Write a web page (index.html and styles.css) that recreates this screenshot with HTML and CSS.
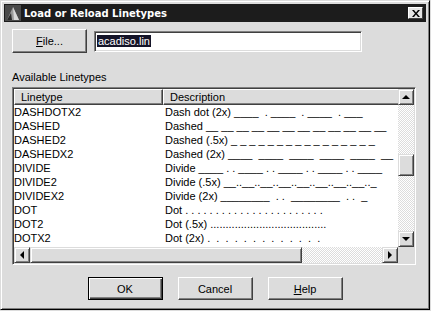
FILE: index.html
```html
<!DOCTYPE html>
<html>
	<head>
		<meta charset="UTF-8">
		<title>Load or Reload Linetypes</title>
		<link rel="stylesheet" href="styles.css">
	</head>
	<body>
		<div class="dialog">
			<div class="titlebar">
				<svg class="app-icon" width="16" height="16" viewBox="0 0 16 16">
					<rect x="0" y="0" width="16" height="16" fill="#4a4a4a"/>
					<polygon points="2,15 8,2 14,15" fill="#9a9a9a"/>
					<polygon points="8,2 14,15 9,15" fill="#d8d8d8"/>
					<polygon points="2,15 6,8 7,15" fill="#2a2a2a"/>
				</svg>
				<span class="title">Load or Reload Linetypes</span>
				<span class="close">
					<svg width="8" height="7" viewBox="0 0 8 7">
						<path d="M0 0h2l2 2.5L6 0h2L5 3.5 8 7H6L4 4.5 2 7H0l3-3.5z" fill="#000"/>
					</svg>
				</span>
			</div>
			<div class="content">
				<div class="file-row">
					<button class="btn file-btn"><u>F</u>ile...</button>
					<div class="field"><span class="sel">acadiso.lin</span></div>
				</div>
				<div class="group-label">Available Linetypes</div>
				<div class="listview">
					<div class="list-main">
						<div class="list-head">
							<div class="col-h c1">Linetype</div>
							<div class="col-h c2">Description</div>
						</div>
						<div class="rows">
							<div class="row"><span class="c1">DASHDOTX2</span><span class="c2">Dash dot (2x) ____  . ____  . ____  . ___</span></div>
							<div class="row"><span class="c1">DASHED</span><span class="c2">Dashed __ __ __ __ __ __ __ __ __ __ __ __</span></div>
							<div class="row"><span class="c1">DASHED2</span><span class="c2">Dashed (.5x) _ _ _ _ _ _ _ _ _ _ _ _ _ _ _ _</span></div>
							<div class="row"><span class="c1">DASHEDX2</span><span class="c2">Dashed (2x) ____  ____  ____  ____  ____  __</span></div>
							<div class="row"><span class="c1">DIVIDE</span><span class="c2">Divide ____ . . ____ . . ____ . . ____ . . ____</span></div>
							<div class="row"><span class="c1">DIVIDE2</span><span class="c2">Divide (.5x) __..__..__..__..__..__..__..__.._</span></div>
							<div class="row"><span class="c1">DIVIDEX2</span><span class="c2">Divide (2x) ________  . .  ________  . .  _</span></div>
							<div class="row"><span class="c1">DOT</span><span class="c2">Dot . . . . . . . . . . . . . . . . . . . . . . .</span></div>
							<div class="row"><span class="c1">DOT2</span><span class="c2">Dot (.5x) ......................................</span></div>
							<div class="row"><span class="c1">DOTX2</span><span class="c2">Dot (2x) .  .  .  .  .  .  .  .  .  .  .  .  .</span></div>
						</div>
					</div>
					<div class="vscroll">
						<div class="sb-btn"><span class="arrow up"></span></div>
						<div class="track t-top"></div>
						<div class="thumb"></div>
						<div class="track t-fill"></div>
						<div class="sb-btn"><span class="arrow down"></span></div>
					</div>
					<div class="hscroll">
						<div class="sb-btn"><span class="arrow left"></span></div>
						<div class="thumb h-thumb"></div>
						<div class="track t-fill"></div>
						<div class="sb-btn"><span class="arrow right"></span></div>
					</div>
					<div class="corner"></div>
				</div>
				<div class="actions">
					<button class="btn btn-default">OK</button>
					<button class="btn">Cancel</button>
					<button class="btn"><u>H</u>elp</button>
				</div>
			</div>
		</div>
	</body>
</html>
```

FILE: styles.css
```css
*{margin:0;padding:0;box-sizing:border-box;}
body{
	background:#dcdcdc;
	font-family:"Liberation Sans", Arial, sans-serif;
	font-size:11px;
	color:#000;
}
.dialog{
	width:430px;
	height:310px;
	background:#dcdcdc;
	border:1px solid;
	border-color:#dcdcdc #000 #000 #dcdcdc;
	box-shadow:inset 1px 1px #fff, inset -1px -1px #808080;
	padding:3px 3px 0 3px;
}
.titlebar{
	height:18px;
	background:#1c1c1c;
	display:flex;
	align-items:center;
	padding:0 3px 0 1px;
}
.app-icon{
	flex:none;
	margin-right:3px;
}
.title{
	flex:1;
	color:#fff;
	font-family:"DejaVu Sans", sans-serif;
	font-weight:bold;
	font-size:10px;
}
.close{
	width:15px;
	height:12px;
	background:#e4e4e4;
	border:1px solid;
	border-color:#fff #404040 #404040 #fff;
	display:flex;
	align-items:center;
	justify-content:center;
}
.content{
	padding:7px 0 0 8px;
}
.file-row{
	display:flex;
	align-items:flex-start;
	gap:7px;
}
.btn{
	width:75px;
	height:23px;
	background:#dcdcdc;
	font-family:"Liberation Sans", Arial, sans-serif;
	font-size:11px;
	color:#000;
	border:1px solid;
	border-color:#fff #404040 #404040 #fff;
	box-shadow:inset -1px -1px #808080;
}
.file-btn{
	height:24px;
}
.btn-default{
	border-color:#000;
	box-shadow:inset 1px 1px #fff, inset -1px -1px #404040, inset -2px -2px #808080;
}
.field{
	width:268px;
	height:21px;
	margin-top:2px;
	background:#fff;
	border:1px solid;
	border-color:#808080 #fff #fff #808080;
	box-shadow:inset 1px 1px #404040, inset -1px -1px #dcdcdc;
	padding:3px 0 0 2px;
	line-height:13px;
}
.sel{
	background:#141428;
	color:#fff;
	padding:0 1px;
}
.group-label{
	margin-top:18px;
	line-height:13px;
	height:16px;
}
.listview{
	width:404px;
	height:178px;
	border:1px solid;
	border-color:#808080 #fff #fff #808080;
	box-shadow:inset 1px 1px #404040, inset -1px -1px #dcdcdc;
	padding:1px;
	display:grid;
	grid-template-columns:384px 16px;
	grid-template-rows:158px 16px;
	background:#fff;
}
.list-main{
	overflow:hidden;
	background:#fff;
}
.list-head{
	display:flex;
	height:16px;
}
.col-h{
	flex:none;
	height:16px;
	line-height:14px;
	background:#dcdcdc;
	border:1px solid;
	border-color:#fff #404040 #404040 #fff;
	box-shadow:inset -1px -1px #808080;
	white-space:nowrap;
}
.col-h.c1{
	width:149px;
	padding-left:6px;
}
.col-h.c2{
	width:240px;
	padding-left:6px;
}
.row{
	display:flex;
	height:14px;
	line-height:14px;
	white-space:pre;
}
.row .c1{
	flex:none;
	width:149px;
}
.row .c2{
	flex:none;
	padding-left:2px;
}
.vscroll,.hscroll{
	display:flex;
	background:#dcdcdc;
}
.vscroll{
	flex-direction:column;
}
.sb-btn{
	flex:none;
	width:16px;
	height:16px;
	background:#dcdcdc;
	border:1px solid;
	border-color:#dcdcdc #404040 #404040 #dcdcdc;
	box-shadow:inset 1px 1px #fff, inset -1px -1px #808080;
	display:flex;
	align-items:center;
	justify-content:center;
}
.arrow{
	width:0;
	height:0;
	border-style:solid;
	border-color:transparent;
}
.arrow.up{
	border-width:0 4px 4px 4px;
	border-bottom-color:#000;
}
.arrow.down{
	border-width:4px 4px 0 4px;
	border-top-color:#000;
}
.arrow.left{
	border-width:4px 4px 4px 0;
	border-right-color:#000;
}
.arrow.right{
	border-width:4px 0 4px 4px;
	border-left-color:#000;
}
.track{
	background:repeating-conic-gradient(#fff 0 25%, #dcdcdc 0 50%) 0 0/2px 2px;
}
.t-top{
	flex:none;
	height:49px;
}
.t-fill{
	flex:1;
}
.thumb{
	flex:none;
	width:16px;
	height:22px;
	background:#dcdcdc;
	border:1px solid;
	border-color:#dcdcdc #404040 #404040 #dcdcdc;
	box-shadow:inset 1px 1px #fff, inset -1px -1px #808080;
}
.h-thumb{
	width:272px;
	height:16px;
}
.corner{
	background:#dcdcdc;
}
.actions{
	display:flex;
	justify-content:center;
	gap:15px;
	margin-top:12px;
	padding-right:8px;
}
```
